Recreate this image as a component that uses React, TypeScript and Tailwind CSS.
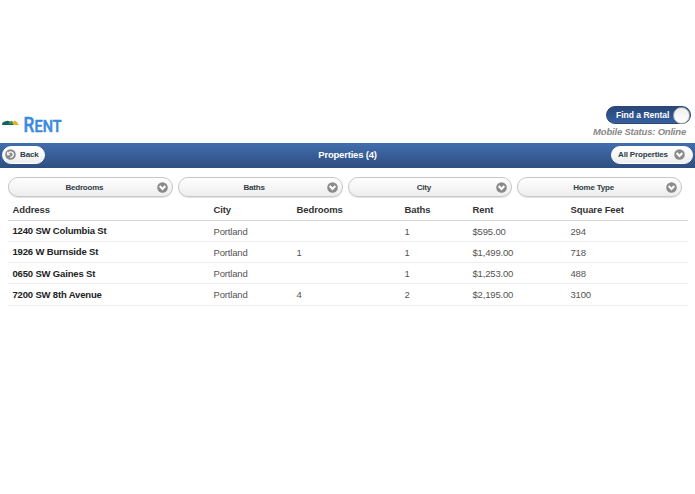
import { useState } from 'react';

// --- Types ---
interface Property {
  address: string;
  city: string;
  bedrooms: string;
  baths: string;
  rent: string;
  squareFeet: string;
}

// --- Data ---
const FILTERS = ['Bedrooms', 'Baths', 'City', 'Home Type'];

const PROPERTIES: Property[] = [
  { address: '1240 SW Columbia St', city: 'Portland', bedrooms: '', baths: '1', rent: '$595.00', squareFeet: '294' },
  { address: '1926 W Burnside St', city: 'Portland', bedrooms: '1', baths: '1', rent: '$1,499.00', squareFeet: '718' },
  { address: '0650 SW Gaines St', city: 'Portland', bedrooms: '', baths: '1', rent: '$1,253.00', squareFeet: '488' },
  { address: '7200 SW 8th Avenue', city: 'Portland', bedrooms: '4', baths: '2', rent: '$2,195.00', squareFeet: '3100' },
];

// --- Icons ---
function ArrowDownIcon() {
  return (
    <svg className="h-[11px] w-[11px] shrink-0" viewBox="0 0 11 11">
      <circle cx="5.5" cy="5.5" r="5.3" fill="#8b8b8b" />
      <path d="M2.7 4.1 5.5 6.9 8.3 4.1" fill="none" stroke="#fff" strokeWidth="2.1" />
    </svg>
  );
}

function BackIcon() {
  return (
    <svg className="h-[11px] w-[11px] shrink-0" viewBox="0 0 11 11">
      <circle cx="5.5" cy="5.5" r="5.3" fill="#8b8b8b" />
      <path d="M3.6 4.1A2.6 2.6 0 1 1 5.4 8.2" fill="none" stroke="#fff" strokeWidth="1.3" />
      <path d="M2 2.6v3.6h3.5z" fill="#fff" />
    </svg>
  );
}

function Logo() {
  return (
    <svg className="h-[24px] w-[70px]" viewBox="0 0 70 24">
      <path d="M2.3 9.9V7.8L4.5 6.4 7.5 5.8 10 6.6 12 9.9z" fill="#12655f" />
      <path d="M8.5 9.9 9.5 7 11.5 5.8 13.2 7 14.2 9.9z" fill="#3d8f4c" />
      <path d="M12 9.9 13 7 15 5.6 17 7.2 19 9.9z" fill="#e0b32c" />
      <path d="M2.3 9h11v1h-11z" fill="#12655f" />
      <g fill="#3b8ae0" stroke="#3b8ae0" strokeWidth="0.5" fontFamily="Roboto, sans-serif" fontWeight="500">
        <text x="23.6" y="16.6" fontSize="19.5" textLength="10.8" lengthAdjust="spacingAndGlyphs">R</text>
        <text x="34.6" y="16.6" fontSize="16" textLength="27" lengthAdjust="spacingAndGlyphs">ENT</text>
      </g>
    </svg>
  );
}

// --- Components ---
function FilterButton({ label }: { label: string }) {
  return (
    <button className="flex h-5 flex-1 items-center rounded-full border border-[#c6c6c6] bg-linear-to-b from-white to-[#ededed] pr-[4px] pl-[4px] text-[8px] font-bold tracking-[-0.2px] text-[#2f3e46] shadow-[0_1px_1px_rgba(0,0,0,0.12)]">
      <span className="flex-1 pt-[2px] pr-[1px] text-center">{label}</span>
      <ArrowDownIcon />
    </button>
  );
}

function PropertyTable() {
  return (
    <table className="mt-[2px] ml-2 w-[680px] table-fixed border-collapse text-left text-[9.5px] leading-[11px] tracking-[-0.17px]">
      <colgroup>
        <col className="w-[201px]" />
        <col className="w-[83px]" />
        <col className="w-[108px]" />
        <col className="w-[68px]" />
        <col className="w-[98px]" />
        <col />
      </colgroup>
      <thead>
        <tr className="h-[21px] border-b border-[#d6d6d6] text-[#333] [&>th]:p-0 [&>th]:pl-[4.5px] [&>th]:tracking-[-0.1px]">
          <th>Address</th>
          <th>City</th>
          <th>Bedrooms</th>
          <th>Baths</th>
          <th>Rent</th>
          <th>Square Feet</th>
        </tr>
      </thead>
      <tbody>
        {PROPERTIES.map((p) => (
          <tr key={p.address} className="h-[21.25px] border-b border-[#eee] text-[#555] [&>*]:p-0 [&>*]:pl-[4.5px] [&>td]:pt-[1px]">
            <th className="text-[#222]">{p.address}</th>
            <td>{p.city}</td>
            <td>{p.bedrooms}</td>
            <td>{p.baths}</td>
            <td>{p.rent}</td>
            <td>{p.squareFeet}</td>
          </tr>
        ))}
      </tbody>
    </table>
  );
}

function App() {
  const [online] = useState(true);

  return (
    <div className="h-[494px] w-[695px] overflow-hidden bg-white pt-[106px] font-['Liberation_Sans',Arial,sans-serif]">
      <header className="flex h-[37px] justify-between">
        <div className="pt-[9px]">
          <Logo />
        </div>
        <div className="flex flex-col items-end pr-[4px]">
          <button className="flex h-[18px] w-[85px] items-center justify-between rounded-full border border-[#2b4672] bg-linear-to-b from-[#29477a] to-[#355f9f] pl-[9px] text-[8.5px] font-bold whitespace-nowrap text-white">
            Find a Rental
            <span className="h-[17px] w-[17px] shrink-0 rounded-full border border-[#aaa] bg-linear-to-b from-[#eee] to-white" />
          </button>
          <p className="mt-[2px] pr-[5px] text-[9.5px] leading-[12px] font-bold tracking-[-0.2px] text-[#8a8a8a] italic">
            Mobile Status: {online ? 'Online' : 'Offline'}
          </p>
        </div>
      </header>

      <nav className="grid h-[25px] grid-cols-[1fr_auto_1fr] items-center bg-linear-to-b from-[#426eae] to-[#2e4e80] pb-[2px] text-[8px] font-bold tracking-[-0.15px] text-[#2f3e46]">
        <button className="ml-[2px] flex h-[18px] w-[43px] items-center gap-[4px] justify-self-start rounded-full border border-white bg-linear-to-b from-white to-[#eee] pl-[2px]">
          <BackIcon />
          Back
        </button>
        <h1 className="pt-[2px] text-[9.5px] tracking-[-0.2px] text-white">Properties (4)</h1>
        <button className="mr-[2px] flex h-[18px] w-[82px] items-center justify-between justify-self-end rounded-full border border-white bg-linear-to-b from-white to-[#eee] pr-[7px] pl-[6px]">
          All Properties
          <ArrowDownIcon />
        </button>
      </nav>

      <main className="pt-[9px]">
        <div className="flex gap-[5px] pr-[13px] pl-2">
          {FILTERS.map((label) => (
            <FilterButton key={label} label={label} />
          ))}
        </div>
        <PropertyTable />
      </main>
    </div>
  );
}

export default App;
